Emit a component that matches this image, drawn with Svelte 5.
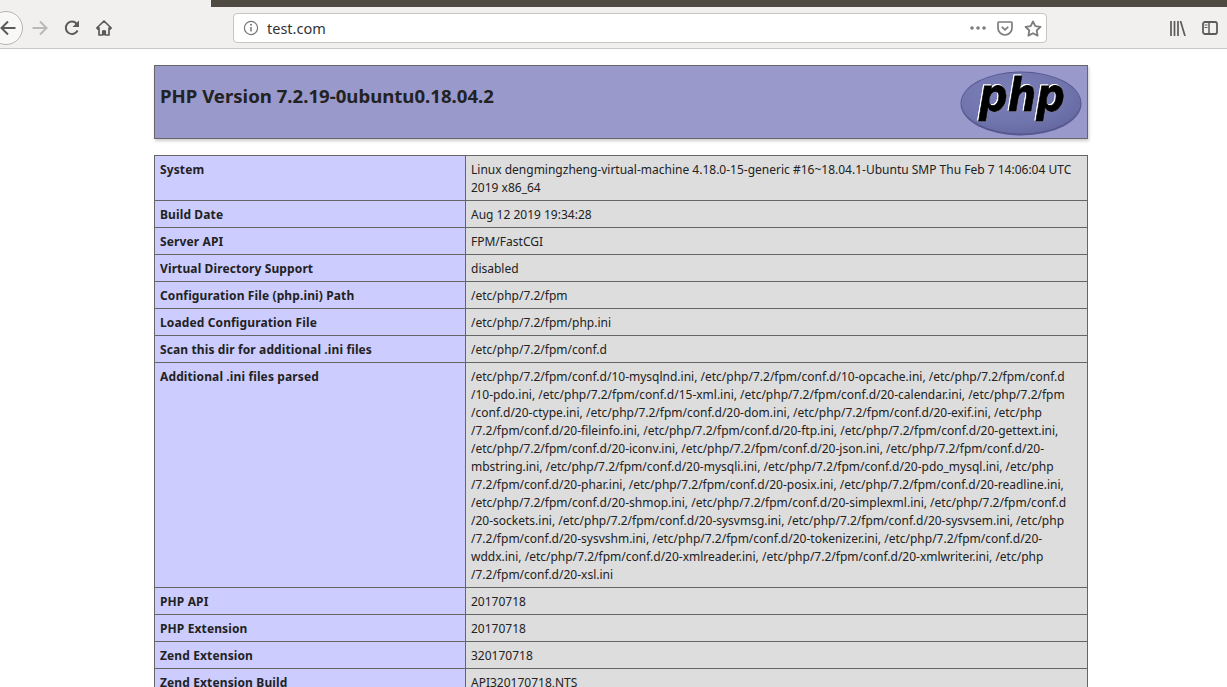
<script lang="ts">
  const rows: { label: string; lines: string[] }[] = [
    { label: "System", lines: ["Linux dengmingzheng-virtual-machine 4.18.0-15-generic #16~18.04.1-Ubuntu SMP Thu Feb 7 14:06:04 UTC", "2019 x86_64"] },
    { label: "Build Date", lines: ["Aug 12 2019 19:34:28"] },
    { label: "Server API", lines: ["FPM/FastCGI"] },
    { label: "Virtual Directory Support", lines: ["disabled"] },
    { label: "Configuration File (php.ini) Path", lines: ["/etc/php/7.2/fpm"] },
    { label: "Loaded Configuration File", lines: ["/etc/php/7.2/fpm/php.ini"] },
    { label: "Scan this dir for additional .ini files", lines: ["/etc/php/7.2/fpm/conf.d"] },
    {
      label: "Additional .ini files parsed",
      lines: [
        "/etc/php/7.2/fpm/conf.d/10-mysqlnd.ini, /etc/php/7.2/fpm/conf.d/10-opcache.ini, /etc/php/7.2/fpm/conf.d",
        "/10-pdo.ini, /etc/php/7.2/fpm/conf.d/15-xml.ini, /etc/php/7.2/fpm/conf.d/20-calendar.ini, /etc/php/7.2/fpm",
        "/conf.d/20-ctype.ini, /etc/php/7.2/fpm/conf.d/20-dom.ini, /etc/php/7.2/fpm/conf.d/20-exif.ini, /etc/php",
        "/7.2/fpm/conf.d/20-fileinfo.ini, /etc/php/7.2/fpm/conf.d/20-ftp.ini, /etc/php/7.2/fpm/conf.d/20-gettext.ini,",
        "/etc/php/7.2/fpm/conf.d/20-iconv.ini, /etc/php/7.2/fpm/conf.d/20-json.ini, /etc/php/7.2/fpm/conf.d/20-",
        "mbstring.ini, /etc/php/7.2/fpm/conf.d/20-mysqli.ini, /etc/php/7.2/fpm/conf.d/20-pdo_mysql.ini, /etc/php",
        "/7.2/fpm/conf.d/20-phar.ini, /etc/php/7.2/fpm/conf.d/20-posix.ini, /etc/php/7.2/fpm/conf.d/20-readline.ini,",
        "/etc/php/7.2/fpm/conf.d/20-shmop.ini, /etc/php/7.2/fpm/conf.d/20-simplexml.ini, /etc/php/7.2/fpm/conf.d",
        "/20-sockets.ini, /etc/php/7.2/fpm/conf.d/20-sysvmsg.ini, /etc/php/7.2/fpm/conf.d/20-sysvsem.ini, /etc/php",
        "/7.2/fpm/conf.d/20-sysvshm.ini, /etc/php/7.2/fpm/conf.d/20-tokenizer.ini, /etc/php/7.2/fpm/conf.d/20-",
        "wddx.ini, /etc/php/7.2/fpm/conf.d/20-xmlreader.ini, /etc/php/7.2/fpm/conf.d/20-xmlwriter.ini, /etc/php",
        "/7.2/fpm/conf.d/20-xsl.ini",
      ],
    },
    { label: "PHP API", lines: ["20170718"] },
    { label: "PHP Extension", lines: ["20170718"] },
    { label: "Zend Extension", lines: ["320170718"] },
    { label: "Zend Extension Build", lines: ["API320170718,NTS"] },
  ];
</script>

<div class="window">
  <div class="titleStrip"></div>
  <header class="toolbar">
    <div class="backBtn">
      <svg width="16" height="16" viewBox="0 0 16 16"><path d="M15.500 8H1.500M8 1.500 1.500 8 8 14.500" fill="none" stroke="#5b5b5a" stroke-width="2" /></svg>
    </div>
    <svg class="tool fwd" width="16" height="16" viewBox="0 0 16 16"><path d="M.5 8h14M8 1.500 14.500 8 8 14.500" fill="none" stroke="#b9b9b8" stroke-width="2" /></svg>
    <svg class="tool reload" width="16" height="16" viewBox="0 0 16 16"><path d="M13.600 10.500A6.200 6.200 0 1 1 12.500 3.500" fill="none" stroke="#5b5b5a" stroke-width="2" /><path d="M15 0.500V7H8.500z" fill="#5b5b5a" /></svg>
    <svg class="tool home" width="16" height="16" viewBox="0 0 16 16"><path d="M8 1 .8 8l1 1L3 8v7h3.800v-4h2.400v4H13V8l1.200 1 1-1z" fill="none" stroke="#5b5b5a" stroke-width="1.700" stroke-linejoin="round" /><path d="M6.500 10.500h3V15h-3z" fill="#5b5b5a" /></svg>

    <div class="urlBar">
      <svg class="info" width="16" height="16" viewBox="0 0 16 16"><circle cx="8" cy="8" r="6.600" fill="none" stroke="#777" stroke-width="1.200" /><path d="M8 7v4.500" stroke="#777" stroke-width="1.500" /><circle cx="8" cy="4.800" r="1" fill="#777" /></svg>
      <span class="url">test.com</span>
      <div class="urlActions">
        <svg width="16" height="4" viewBox="0 0 16 4"><circle cx="2" cy="2" r="1.800" fill="#7d7d7d" /><circle cx="8" cy="2" r="1.800" fill="#7d7d7d" /><circle cx="14" cy="2" r="1.800" fill="#7d7d7d" /></svg>
        <svg class="pocket" width="16" height="15" viewBox="0 0 16 15"><path d="M1.800 1h12.400a.8.8 0 0 1 .8.8V7a7 7 0 0 1-14 0V1.800a.8.8 0 0 1 .8-.8z" fill="none" stroke="#7d7d7d" stroke-width="1.700" /><path d="M4.800 5.800 8 8.800l3.200-3" fill="none" stroke="#7d7d7d" stroke-width="1.800" /></svg>
        <svg class="star" width="18" height="17" viewBox="0 0 18 17"><path d="M9 1.500 11.300 6.200l5.200.7-3.800 3.600.9 5.100L9 13.200l-4.600 2.400.9-5.100L1.500 6.900l5.200-.7z" fill="none" stroke="#7d7d7d" stroke-width="1.800" stroke-linejoin="round" /></svg>
      </div>
    </div>

    <svg class="tool library" width="16" height="15" viewBox="0 0 16 15"><path d="M1 0v15M4.500 0v15M8 0v15M10.500 0 15 15" fill="none" stroke="#5b5b5a" stroke-width="1.700" /></svg>
    <svg class="tool sidebar" width="16" height="14" viewBox="0 0 16 14"><rect x="1" y="1" width="14" height="12" rx="2" fill="none" stroke="#5b5b5a" stroke-width="1.800" /><path d="M7 1v12" stroke="#5b5b5a" stroke-width="1.500" /><path d="M2.500 4h3M2.500 6.500h3" stroke="#5b5b5a" stroke-width="1" /></svg>
  </header>

  <main class="page">
    <div class="phpHeader">
      <h1>PHP Version 7.2.19-0ubuntu0.18.04.2</h1>
      <svg class="logo" width="122" height="65" viewBox="0 0 122 65">
        <defs>
          <radialGradient id="ell" cx="0.4" cy="0.35" r="0.75">
            <stop offset="0" stop-color="#7e81b9" />
            <stop offset="0.65" stop-color="#7074ac" />
            <stop offset="1" stop-color="#63669e" />
          </radialGradient>
        </defs>
        <ellipse cx="61" cy="32.500" rx="60.500" ry="32" fill="#55578f" />
        <ellipse cx="61" cy="32" rx="59.500" ry="30.500" fill="url(#ell)" />
        <text class="logoText" x="62" y="40" text-anchor="middle" textLength="86" lengthAdjust="spacingAndGlyphs">php</text>
      </svg>
    </div>

    <table>
      <tbody>
        {#each rows as row}
          <tr>
            <td class="key">{row.label}</td>
            <td class="val">
              {#each row.lines as line}
                <div class="line">{line}</div>
              {/each}
            </td>
          </tr>
        {/each}
      </tbody>
    </table>
  </main>
</div>

<style>
  :global(body) {
    margin: 0;
    background: #fff;
  }

  .window {
    height: 687px;
    overflow: hidden;
    font-family: "Noto Sans", sans-serif;
    color: #222;
    background: linear-gradient(#f1f0ee 7px, transparent 7px);
  }

  .titleStrip {
    height: 7px;
    margin-left: 211px;
    background: #4f4b43;
  }

  .toolbar {
    display: flex;
    align-items: center;
    height: 41px;
    background: #f1f0ee;
    border-bottom: 1px solid #c9c8c5;
  }

  .backBtn {
    flex: none;
    box-sizing: border-box;
    width: 34px;
    height: 34px;
    margin-left: -11px;
    margin-top: 1px;
    padding-left: 10px;
    display: flex;
    align-items: center;
    border: 1px solid #b5b5b3;
    border-radius: 50%;
    background: #f8f8f7;
  }

  .tool {
    flex: none;
    margin-top: 1px;
  }

  .fwd {
    margin-left: 9px;
  }

  .reload {
    margin-left: 16px;
  }

  .home {
    margin-left: 16px;
  }

  .urlBar {
    flex: none;
    display: flex;
    align-items: center;
    box-sizing: border-box;
    width: 814px;
    height: 30px;
    margin-left: 121px;
    margin-top: 1px;
    padding: 0 4px 0 9px;
    background: #fff;
    border: 1px solid #c6c5c2;
    border-radius: 4px;
  }

  .url {
    margin-left: 8px;
    font-size: 14.500px;
    color: #333;
  }

  .urlActions {
    margin-left: auto;
    display: flex;
    align-items: center;
    gap: 11px;
  }

  .library {
    margin-left: 123px;
  }

  .sidebar {
    margin-left: 16px;
  }

  .page {
    padding: 16px 0 0 154px;
  }

  .phpHeader {
    display: flex;
    justify-content: space-between;
    box-sizing: border-box;
    width: 934px;
    height: 74px;
    padding: 5px 5px 0;
    background: #9999cc;
    border: 1px solid #666;
    box-shadow: 1px 2px 3px #ccc;
  }

  h1 {
    margin: 0;
    padding-top: 12px;
    font-size: 18.600px;
    line-height: 26px;
    font-weight: 700;
    color: #222;
  }

  .logoText {
    font-family: "DejaVu Sans", sans-serif;
    font-size: 46px;
    font-weight: 700;
    font-style: italic;
    fill: #000;
    stroke: #000;
    stroke-width: 0.800px;
    filter: drop-shadow(0.8px 0.8px 0 #fff) drop-shadow(-0.4px -0.4px 0 #fff);
  }

  table {
    width: 934px;
    margin-top: 16px;
    border-collapse: collapse;
    table-layout: fixed;
    font-size: 12px;
    line-height: 18px;
  }

  td {
    padding: 5px 5px 3px;
    border: 1px solid #666;
    vertical-align: baseline;
    color: #222;
  }

  .key {
    width: 300px;
    font-weight: 700;
    letter-spacing: 0.12px;
    background: #ccccff;
  }

  .val {
    background: #dddddd;
  }

  .line {
    white-space: nowrap;
  }
</style>
